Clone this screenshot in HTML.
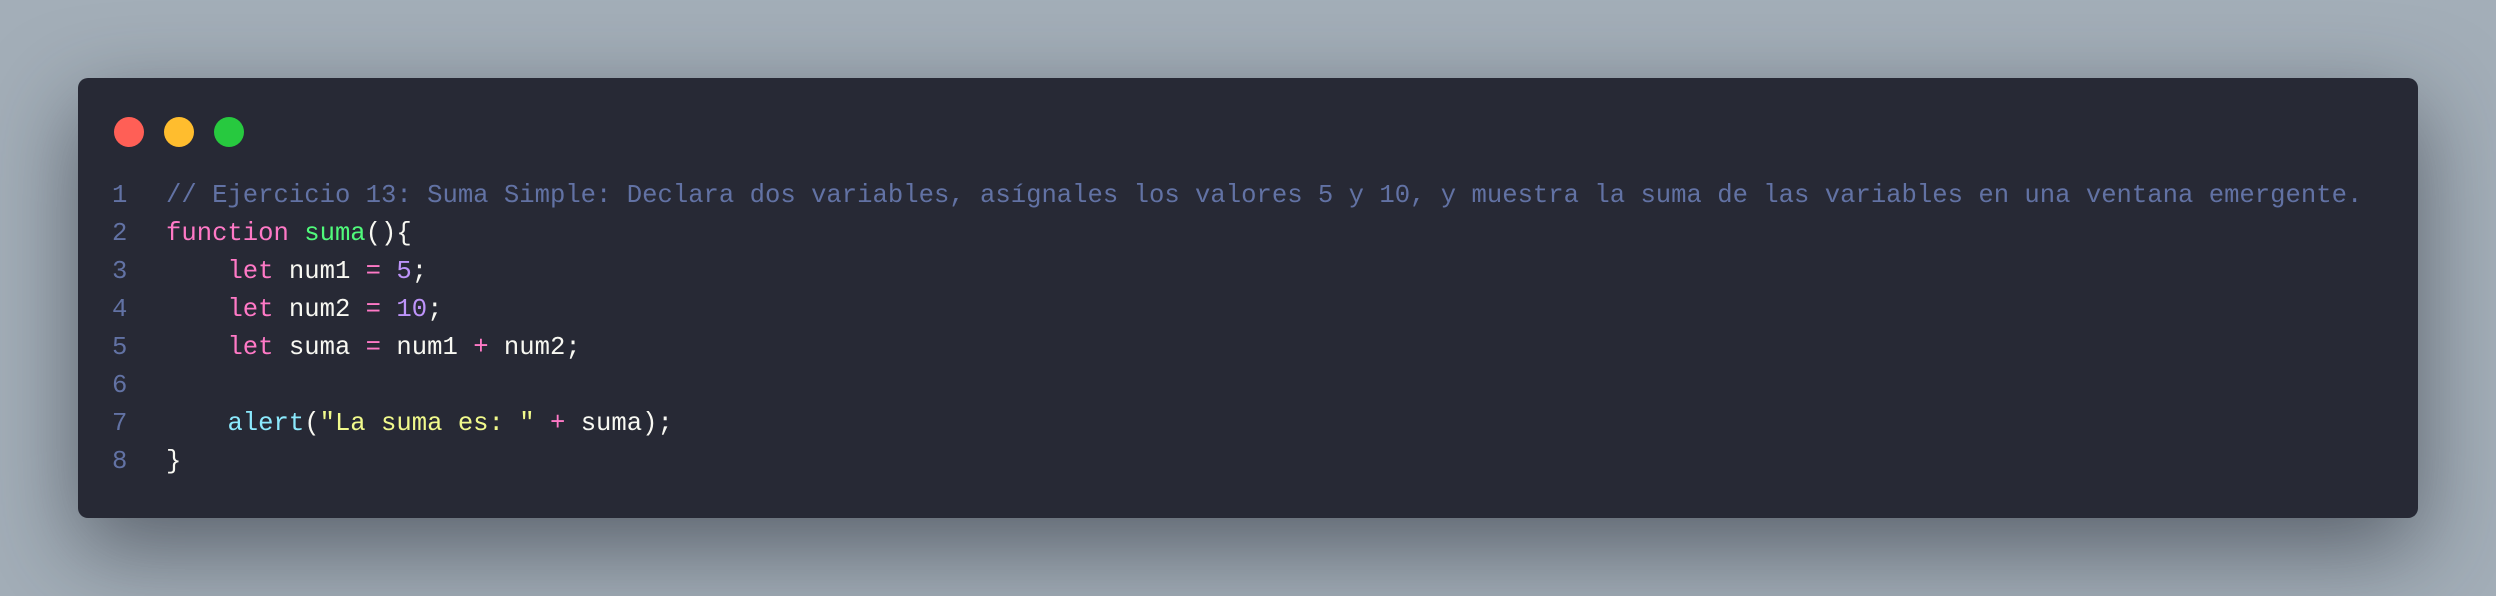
<!DOCTYPE html>
<html><head><meta charset="utf-8"><style>
html,body{margin:0;padding:0;}
body{width:2496px;height:596px;background:#a3aeb8;position:relative;overflow:hidden;}
.card{position:absolute;left:78px;top:78px;width:2340px;height:440px;background:#272935;border-radius:10px;box-shadow:0 30px 90px rgba(40,45,55,0.6);}
.dot{position:absolute;top:117px;width:30px;height:30px;border-radius:50%;}
.code{position:absolute;left:0;top:177px;font-family:"Liberation Mono",monospace;font-size:25.6px;line-height:38px;white-space:pre;color:#f8f8f2;}
.ln{position:absolute;top:0;left:112px;width:30px;color:#6272a4;}
.tx{position:absolute;top:0;left:166px;}
.c{color:#6272a4}.k{color:#ff79c6}.f{color:#50fa7b}.n{color:#bd93f9}.b{color:#8be9fd}.s{color:#f1fa8c}
</style></head><body>
<div class="card"></div>
<div class="dot" style="left:114px;background:#ff5f56"></div>
<div class="dot" style="left:164px;background:#ffbd2e"></div>
<div class="dot" style="left:214px;background:#27c93f"></div>
<div class="code"><div class="ln">1
2
3
4
5
6
7
8</div><div class="tx"><span class="c">// Ejercicio 13: Suma Simple: Declara dos variables, asígnales los valores 5 y 10, y muestra la suma de las variables en una ventana emergente.</span>
<span class="k">function</span> <span class="f">suma</span>(){
    <span class="k">let</span> num1 <span class="k">=</span> <span class="n">5</span>;
    <span class="k">let</span> num2 <span class="k">=</span> <span class="n">10</span>;
    <span class="k">let</span> suma <span class="k">=</span> num1 <span class="k">+</span> num2;

    <span class="b">alert</span>(<span class="s">"La suma es: "</span> <span class="k">+</span> suma);
}</div></div>
</body></html>
